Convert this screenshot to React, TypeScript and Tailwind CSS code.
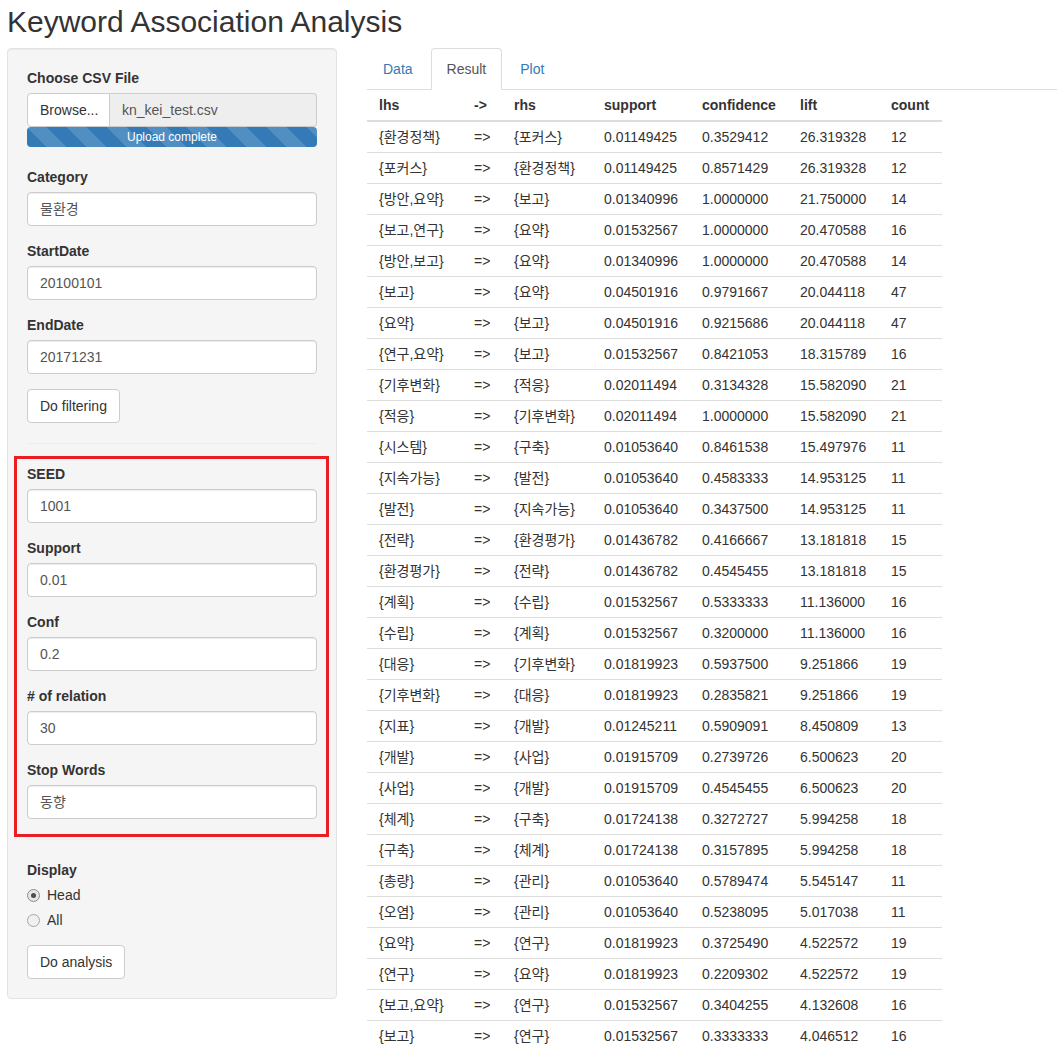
import React from 'react';

const rows: string[][] = [
	['{환경정책}', '{포커스}', '0.01149425', '0.3529412', '26.319328', '12'],
	['{포커스}', '{환경정책}', '0.01149425', '0.8571429', '26.319328', '12'],
	['{방안,요약}', '{보고}', '0.01340996', '1.0000000', '21.750000', '14'],
	['{보고,연구}', '{요약}', '0.01532567', '1.0000000', '20.470588', '16'],
	['{방안,보고}', '{요약}', '0.01340996', '1.0000000', '20.470588', '14'],
	['{보고}', '{요약}', '0.04501916', '0.9791667', '20.044118', '47'],
	['{요약}', '{보고}', '0.04501916', '0.9215686', '20.044118', '47'],
	['{연구,요약}', '{보고}', '0.01532567', '0.8421053', '18.315789', '16'],
	['{기후변화}', '{적응}', '0.02011494', '0.3134328', '15.582090', '21'],
	['{적응}', '{기후변화}', '0.02011494', '1.0000000', '15.582090', '21'],
	['{시스템}', '{구축}', '0.01053640', '0.8461538', '15.497976', '11'],
	['{지속가능}', '{발전}', '0.01053640', '0.4583333', '14.953125', '11'],
	['{발전}', '{지속가능}', '0.01053640', '0.3437500', '14.953125', '11'],
	['{전략}', '{환경평가}', '0.01436782', '0.4166667', '13.181818', '15'],
	['{환경평가}', '{전략}', '0.01436782', '0.4545455', '13.181818', '15'],
	['{계획}', '{수립}', '0.01532567', '0.5333333', '11.136000', '16'],
	['{수립}', '{계획}', '0.01532567', '0.3200000', '11.136000', '16'],
	['{대응}', '{기후변화}', '0.01819923', '0.5937500', '9.251866', '19'],
	['{기후변화}', '{대응}', '0.01819923', '0.2835821', '9.251866', '19'],
	['{지표}', '{개발}', '0.01245211', '0.5909091', '8.450809', '13'],
	['{개발}', '{사업}', '0.01915709', '0.2739726', '6.500623', '20'],
	['{사업}', '{개발}', '0.01915709', '0.4545455', '6.500623', '20'],
	['{체계}', '{구축}', '0.01724138', '0.3272727', '5.994258', '18'],
	['{구축}', '{체계}', '0.01724138', '0.3157895', '5.994258', '18'],
	['{총량}', '{관리}', '0.01053640', '0.5789474', '5.545147', '11'],
	['{오염}', '{관리}', '0.01053640', '0.5238095', '5.017038', '11'],
	['{요약}', '{연구}', '0.01819923', '0.3725490', '4.522572', '19'],
	['{연구}', '{요약}', '0.01819923', '0.2209302', '4.522572', '19'],
	['{보고,요약}', '{연구}', '0.01532567', '0.3404255', '4.132608', '16'],
	['{보고}', '{연구}', '0.01532567', '0.3333333', '4.046512', '16'],
];

const Label = ({ children }: { children: React.ReactNode }) => (
	<div className="font-bold leading-5 mb-[5px]">{children}</div>
);

const TextField = ({ label, value, last }: { label: string; value: string; last?: boolean }) => (
	<div className={last ? '' : 'mb-[15px]'}>
		<Label>{label}</Label>
		<div className="h-[34px] bg-white border border-[#ccc] rounded-[4px] px-3 py-[6px] leading-5 text-[#555] shadow-[inset_0_1px_1px_rgba(0,0,0,0.075)]">
			{value}
		</div>
	</div>
);

const Btn = ({ children }: { children: React.ReactNode }) => (
	<button className="self-start h-[34px] bg-white border border-[#ccc] rounded-[4px] px-3 leading-5 text-[#333]">
		{children}
	</button>
);

const Radio = ({ label, checked }: { label: string; checked?: boolean }) => (
	<div className="flex items-center h-5">
		<span
			className={
				checked
					? 'w-[13px] h-[13px] rounded-full border border-[#8c8c8c] bg-[#e6e6e6] flex items-center justify-center'
					: 'w-[13px] h-[13px] rounded-full border border-[#a6a6a6] bg-[#f0f0f0]'
			}
		>
			{checked && <span className="w-[5px] h-[5px] rounded-full bg-[#4d4d4d]" />}
		</span>
		<span className="ml-[7px] text-[#333]">{label}</span>
	</div>
);

const cols = ['w-[95px]', 'w-[40px]', 'w-[90px]', 'w-[98px]', 'w-[98px]', 'w-[91px]', 'w-[63px]'];
const heads = ['lhs', '->', 'rhs', 'support', 'confidence', 'lift', 'count'];

export default function App() {
	return (
		<div className="min-h-[1063px] bg-white text-[#333] text-[14px] font-['Liberation_Sans','Noto_Sans_CJK_KR',sans-serif] pl-[7px]">
			<h2 className="text-[30px] leading-[33px] font-normal pt-[5px] mb-[10px]">Keyword Association Analysis</h2>

			<div className="flex items-start">
				{/* sidebar */}
				<div className="w-[330px] bg-[#f5f5f5] border border-[#e3e3e3] rounded-[4px] p-[19px] flex flex-col shadow-[inset_0_1px_1px_rgba(0,0,0,0.05)]">
					<div className="mb-5">
						<Label>Choose CSV File</Label>
						<div className="flex h-[34px]">
							<div className="w-[83px] bg-white border border-[#ccc] rounded-l-[4px] px-3 py-[6px] leading-5 text-[#333]">
								Browse...
							</div>
							<div className="flex-1 bg-[#eee] border border-l-0 border-[#ccc] rounded-r-[4px] px-3 py-[6px] leading-5 text-[#555]">
								kn_kei_test.csv
							</div>
						</div>
						<div className="h-5 rounded-[4px] bg-[#337ab7] bg-[linear-gradient(45deg,rgba(255,255,255,.15)_25%,transparent_25%,transparent_50%,rgba(255,255,255,.15)_50%,rgba(255,255,255,.15)_75%,transparent_75%,transparent)] bg-[length:40px_40px] text-white text-[12px] leading-5 text-center">
							Upload complete
						</div>
					</div>

					<TextField label="Category" value="물환경" />
					<TextField label="StartDate" value="20100101" />
					<TextField label="EndDate" value="20171231" />
					<Btn>Do filtering</Btn>

					<hr className="my-5 border-0 border-t border-[#eee]" />

					<div className="relative">
						<TextField label="SEED" value="1001" />
						<TextField label="Support" value="0.01" />
						<TextField label="Conf" value="0.2" />
						<TextField label="# of relation" value="30" />
						<TextField label="Stop Words" value="동향" last />
						<div className="absolute -left-[13px] -right-[12px] -top-[8px] -bottom-[18px] border-[3px] border-[#ec1c24] pointer-events-none" />
					</div>

					<hr className="my-5 border-0 border-t border-[#eee]" />

					<Label>Display</Label>
					<div className="flex flex-col gap-[5px]">
						<Radio label="Head" checked />
						<Radio label="All" />
					</div>
					<div className="mt-[15px] flex">
						<Btn>Do analysis</Btn>
					</div>
				</div>

				{/* main panel */}
				<div className="ml-[30px] w-[690px]">
					<ul className="flex border-b border-[#ddd] h-[42px]">
						<li className="mr-[2px]">
							<a className="block px-[15px] py-[10px] leading-5 border border-transparent text-[#337ab7]">Data</a>
						</li>
						<li className="mr-[2px]">
							<a className="block px-[15px] py-[10px] leading-5 border border-[#ddd] border-b-white rounded-t-[4px] bg-white text-[#555]">
								Result
							</a>
						</li>
						<li className="mr-[2px]">
							<a className="block px-[15px] py-[10px] leading-5 border border-transparent text-[#337ab7]">Plot</a>
						</li>
					</ul>

					<table className="table-fixed w-[575px] border-separate border-spacing-0">
						<thead>
							<tr>
								{heads.map((h, i) => (
									<th
										key={h}
										className={`${cols[i]} text-left font-bold leading-5 pl-3 pt-[5px] pb-[5px] border-b-2 border-[#ddd] whitespace-nowrap`}
									>
										{h}
									</th>
								))}
							</tr>
						</thead>
						<tbody>
							{rows.map((r, i) => (
								<tr key={i}>
									{[r[0], '=>', r[1], r[2], r[3], r[4], r[5]].map((c, j) => (
										<td
											key={j}
											className={
												i > 0
													? 'pl-3 py-[5px] leading-5 whitespace-nowrap border-t border-[#ddd]'
													: 'pl-3 py-[5px] leading-5 whitespace-nowrap'
											}
										>
											{c}
										</td>
									))}
								</tr>
							))}
						</tbody>
					</table>
				</div>
			</div>
		</div>
	);
}
